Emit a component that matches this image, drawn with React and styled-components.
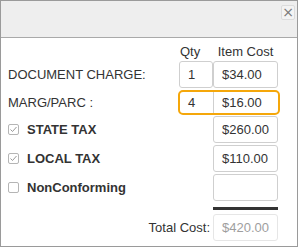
import React from "react";
import styled, { createGlobalStyle, css } from "styled-components";

const Global = createGlobalStyle`
  html, body { margin: 0; padding: 0; background: #fff; }
  body { font-family: "Liberation Sans", Arial, sans-serif; }
`;

const Frame = styled.div`
  width: 298px;
  height: 247px;
  box-sizing: border-box;
  border: 1px solid #9a9a9a;
  display: flex;
  flex-direction: column;
  background: #fff;
  color: #333;
`;

const Header = styled.div`
  height: 32px;
  background: #eeeeee;
  border-bottom: 1px solid #a9a9a9;
  display: flex;
  justify-content: flex-end;
  align-items: flex-start;
  padding: 4px 2px 0 0;
  box-sizing: content-box;
`;

const CloseBtn = styled.button`
  width: 14px;
  height: 15px;
  padding: 0;
  border: 1px solid #dcdcdc;
  border-radius: 2px;
  background: #f3f3f3;
  color: #777;
  font: 14px/13px "DejaVu Sans", sans-serif;
  display: flex;
  align-items: center;
  justify-content: center;
`;

const Body = styled.div`
  display: grid;
  grid-template-columns: 1fr 34px 65px;
  align-items: center;
  padding: 6px 19px 0 7px;
  font-size: 13px;
`;

const ColHead = styled.div`
  text-align: ${(p) => (p.$left ? "left" : "center")};
  padding-left: ${(p) => (p.$left ? "1px" : "0")};
  height: 17px;
  line-height: 15px;
  font-size: 13px;
  color: #333;
  align-self: start;
`;

const Label = styled.div`
  display: flex;
  align-items: center;
  font-size: 13px;
  margin-bottom: 2px;
  ${(p) => p.$bold && css`font-weight: bold;`}
  ${(p) => p.$right && css`justify-content: flex-end; padding-right: 3px;`}
`;

const Box = styled.div`
  height: 27px;
  box-sizing: border-box;
  border: 1px solid ${(p) => (p.$faint ? "#e6e6e6" : "#cfcfcf")};
  border-radius: 3px;
  display: flex;
  align-items: center;
  padding-left: 8px;
  font-size: 13px;
  color: ${(p) => (p.$faint ? "#9e9e9e" : "#333")};
  margin-bottom: 2px;
`;

const Highlight = styled.div`
  grid-column: 2 / span 2;
  display: grid;
  grid-template-columns: 33px 65px;
  margin: 0 -2px 1px -1px;
  border: 2px solid #f5a70a;
  border-radius: 5px;
  height: 25px;
  box-sizing: border-box;
  overflow: hidden;
`;

const InnerBox = styled.div`
  display: flex;
  align-items: center;
  padding-left: 8px;
  font-size: 13px;
  color: #333;
  & + & { border-left: 1px solid #cfcfcf; }
`;

const Check = styled.span`
  width: 11px;
  height: 11px;
  box-sizing: border-box;
  border: 1px solid #b5b5b5;
  border-radius: 2px;
  margin-right: 8px;
  display: inline-flex;
  align-items: center;
  justify-content: center;
`;

const Divider = styled.div`
  grid-column: 3;
  height: 3px;
  background: #333;
  margin: 4px 0 4px;
`;

const TotalLabel = styled(Label)`
  grid-column: 1 / span 2;
`;

const Spacer = styled.div``;

const Tick = () => (
  <svg width="9" height="9" viewBox="0 0 9 9">
    <path d="M1.5 4.5 L3.5 6.5 L7.5 2" fill="none" stroke="#999" strokeWidth="1" />
  </svg>
);

export default function App() {
  return (
    <>
      <Global />
      <Frame>
        <Header>
          <CloseBtn>×</CloseBtn>
        </Header>
        <Body>
          <Spacer />
          <ColHead $left>Qty</ColHead>
          <ColHead>Item Cost</ColHead>

          <Label>DOCUMENT CHARGE:</Label>
          <Box>1</Box>
          <Box>$34.00</Box>

          <Label>MARG/PARC :</Label>
          <Highlight>
            <InnerBox>4</InnerBox>
            <InnerBox>$16.00</InnerBox>
          </Highlight>

          <Label $bold>
            <Check><Tick /></Check>STATE TAX
          </Label>
          <Spacer />
          <Box>$260.00</Box>

          <Label $bold>
            <Check><Tick /></Check>LOCAL TAX
          </Label>
          <Spacer />
          <Box>$110.00</Box>

          <Label $bold>
            <Check />NonConforming
          </Label>
          <Spacer />
          <Box />

          <Divider />

          <TotalLabel $right>Total Cost:</TotalLabel>
          <Box $faint>$420.00</Box>
        </Body>
      </Frame>
    </>
  );
}
